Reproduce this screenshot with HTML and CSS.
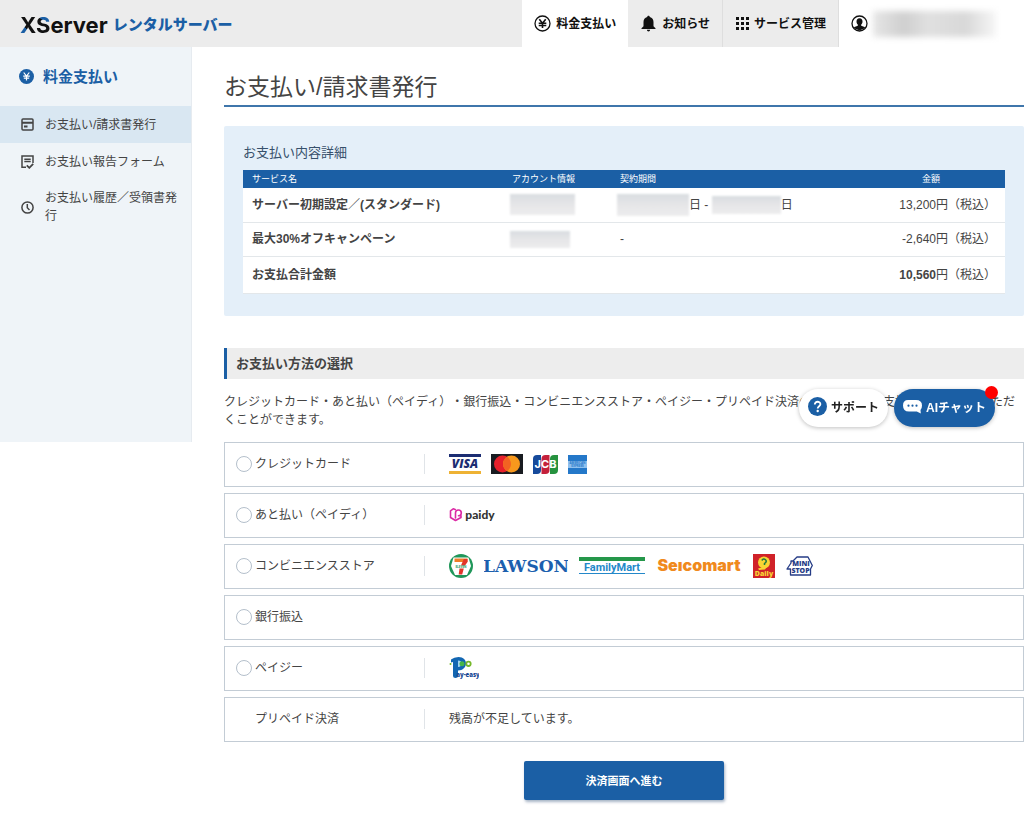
FILE: index.html
```html
<!DOCTYPE html>
<html lang="ja">
<head>
    <meta charset="UTF-8">
    <meta name="viewport" content="width=device-width, initial-scale=1.0">
    <title>お支払い/請求書発行</title>
    <link rel="stylesheet" href="styles.css">
</head>
<body>
    <header class="header">
        <a href="#" class="logo">
            <span class="logo-name"><span class="logo-x">X</span><span class="logo-s">S</span>erver</span>
            <span class="logo-sub">レンタルサーバー</span>
        </a>
        <nav class="header-nav">
            <a href="#" class="nav-item current">
                <svg width="17" height="17" viewBox="0 0 17 17" fill="none" stroke="#111">
                    <circle cx="8.5" cy="8.5" r="7.5" stroke-width="1.3"/>
                    <path d="M5.3 4.2 8.5 8.2 11.7 4.2M8.5 8v5M4.7 8.2h7.6M4.7 10.5h7.6" stroke-width="1.6"/>
                </svg>
                料金支払い
            </a>
            <a href="#" class="nav-item">
                <svg width="17" height="17" viewBox="0 0 17 17" fill="#111">
                    <path d="M8.5.7c.8 0 1.3.6 1.3 1.3 2.4.6 3.7 2.5 3.7 5v4.2l2 2v.9h-14v-.9l2-2V7c0-2.5 1.3-4.4 3.7-5 0-.7.5-1.3 1.3-1.3zM6.9 14.8h3.2a1.6 1.6 0 0 1-3.2 0z"/>
                </svg>
                お知らせ
            </a>
            <a href="#" class="nav-item">
                <svg width="14" height="14" viewBox="0 0 14 14" fill="#111">
                    <path d="M1 0h3v3H1zM6 0h3v3H6zM11 0h3v3h-3zM1 5h3v3H1zM6 5h3v3H6zM11 5h3v3h-3zM1 10h3v3H1zM6 10h3v3H6zM11 10h3v3h-3z"/>
                </svg>
                サービス管理
            </a>
            <a href="#" class="nav-item account" aria-label="アカウント">
                <svg width="17" height="17" viewBox="0 0 17 17">
                    <circle cx="8.5" cy="8.5" r="7.5" fill="none" stroke="#111" stroke-width="1.3"/>
                    <path d="M8.5 3.2c2 0 3 1.3 3 3.2 0 1.3-.5 2.5-1.3 3.2v1.2l4 1.4a7 7 0 0 1-11.4 0l4-1.4V9.6C6 8.9 5.5 7.7 5.5 6.4c0-1.9 1-3.2 3-3.2z" fill="#111"/>
                </svg>
                <span class="account-name"></span>
            </a>
        </nav>
    </header>

    <div class="container">
        <aside class="sidebar">
            <h2 class="side-title">
                <svg width="15" height="15" viewBox="0 0 15 15">
                    <circle cx="7.5" cy="7.5" r="7.5" fill="#1b5fa5"/>
                    <path d="M4.7 3.5 7.5 7l2.8-3.5M7.5 7v4.5M4.2 7.2h6.6M4.8 9.2h5.4" fill="none" stroke="#fff" stroke-width="1.2"/>
                </svg>
                料金支払い
            </h2>
            <ul class="side-menu">
                <li>
                    <a href="#" class="active">
                        <svg width="13" height="13" viewBox="0 0 13 13" fill="none" stroke="#444" stroke-width="1.5">
                            <rect x="1" y="1" width="11" height="11" rx="1"/>
                            <path d="M1 4.8h11M3 8.5h3.5" stroke-width="2"/>
                        </svg>
                        <span>お支払い/請求書発行</span>
                    </a>
                </li>
                <li>
                    <a href="#">
                        <svg width="13" height="14" viewBox="0 0 13 14" fill="none" stroke="#444" stroke-width="1.5">
                            <path d="M5 12.2H1V1h11v7M3.3 4.2h6.4M3.3 6.6h6.4"/>
                            <path d="M5.8 10.3l2.5 2.5 3.9-3.9" stroke-width="1.8"/>
                        </svg>
                        <span>お支払い報告フォーム</span>
                    </a>
                </li>
                <li>
                    <a href="#">
                        <svg width="13" height="13" viewBox="0 0 13 13" fill="none" stroke="#444" stroke-width="1.5">
                            <circle cx="6.5" cy="6.5" r="5.6"/>
                            <path d="M6.3 3v3.8l2.2 2.2"/>
                        </svg>
                        <span>お支払い履歴／受領書発行</span>
                    </a>
                </li>
            </ul>
        </aside>

        <main class="main">
            <h1 class="page-title">お支払い/請求書発行</h1>

            <section class="detail">
                <h2 class="detail-title">お支払い内容詳細</h2>
                <table class="detail-table">
                    <thead>
                        <tr>
                            <th class="col-service">サービス名</th>
                            <th class="col-account">アカウント情報</th>
                            <th>契約期間</th>
                            <th class="col-price">金額</th>
                        </tr>
                    </thead>
                    <tbody>
                        <tr>
                            <td class="name">サーバー初期設定／(スタンダード)</td>
                            <td><span class="mask mask-account"></span></td>
                            <td><span class="period"><span class="mask mask-start"></span>日 - <span class="mask mask-end"></span>日</span></td>
                            <td class="price">13,200円（税込）</td>
                        </tr>
                        <tr>
                            <td class="name">最大30%オフキャンペーン</td>
                            <td><span class="mask mask-account low"></span></td>
                            <td>-</td>
                            <td class="price">-2,640円（税込）</td>
                        </tr>
                        <tr class="total">
                            <td class="name">お支払合計金額</td>
                            <td></td>
                            <td></td>
                            <td class="price"><strong>10,560</strong>円（税込）</td>
                        </tr>
                    </tbody>
                </table>
            </section>

            <h2 class="section-title">お支払い方法の選択</h2>
            <p class="lead">クレジットカード・あと払い（ペイディ）・銀行振込・コンビニエンスストア・ペイジー・プリペイド決済の中から任意の支払方法をお選びいただくことができます。</p>

            <form action="#" method="post">
                <div class="method">
                    <label class="method-name"><input type="radio" name="payment" value="credit">クレジットカード</label>
                    <div class="method-body cards">
                        <svg width="32" height="20" viewBox="0 0 32 20" role="img" aria-label="VISA">
                            <path d="M0 0h32v3H0z" fill="#1c2d72"/>
                            <path d="M0 17h32v3H0z" fill="#eeb234"/>
                            <text x="16" y="14" class="brand visa">VISA</text>
                        </svg>
                        <svg width="32" height="20" viewBox="0 0 32 20" role="img" aria-label="Mastercard">
                            <path d="M0 0h32v20H0z" fill="#181b20"/>
                            <circle cx="11.5" cy="10" r="8.5" fill="#e6202b"/>
                            <circle cx="20.5" cy="10" r="8.5" fill="#f7981d"/>
                            <path d="M16 2.8a8.5 8.5 0 0 1 0 14.4 8.5 8.5 0 0 1 0-14.4z" fill="#f26322"/>
                        </svg>
                        <svg width="25" height="19" viewBox="0 0 25 19" role="img" aria-label="JCB">
                            <path d="M4 0h4v15q0 4-4 4H0V4q0-4 4-4z" fill="#164a9b"/>
                            <path d="M12.5 0h4v15q0 4-4 4h-4V4q0-4 4-4z" fill="#c4203b"/>
                            <path d="M21 0h4v15q0 4-4 4h-4V4q0-4 4-4z" fill="#26923f"/>
                            <text x="12.5" y="13" class="brand jcb">JCB</text>
                        </svg>
                        <svg width="19" height="19" viewBox="0 0 19 19" role="img" aria-label="American Express">
                            <path d="M0 0h19v19H0z" fill="#2478c9"/>
                            <path d="M0 6h19v7H0z" fill="#8fc0ee"/>
                            <text x="9.5" y="9.2" class="brand amex">AMERICAN</text>
                            <text x="9.5" y="12.4" class="brand amex">EXPRESS</text>
                        </svg>
                    </div>
                </div>

                <div class="method">
                    <label class="method-name"><input type="radio" name="payment" value="paidy">あと払い（ペイディ）</label>
                    <div class="method-body">
                        <svg width="48" height="18" viewBox="0 0 48 18" role="img" aria-label="paidy">
                            <path d="M6.5 12V6.8a2.9 2.9 0 1 1 3 3M6.2 3.4 4.2 2.8 1.5 4.8v6.7l5 3 5.5-3V9.5" fill="none" stroke="#dc2aa5" stroke-width="1.6" stroke-linejoin="round" stroke-linecap="round"/>
                            <text x="31" y="13" class="brand paidy">paidy</text>
                        </svg>
                    </div>
                </div>

                <div class="method">
                    <label class="method-name"><input type="radio" name="payment" value="cvs">コンビニエンスストア</label>
                    <div class="method-body stores">
                        <svg width="24" height="24" viewBox="0 0 24 24" role="img" aria-label="セブン-イレブン">
                            <circle cx="12" cy="12" r="12" fill="#20975a"/>
                            <path d="M4.5 3.5h15L22 12l-4 9H6L2 12z" fill="#fff"/>
                            <path d="M5.5 4.5h13V8h-13z" fill="#ef7d28"/>
                            <path d="M14.8 5h3.7v3L16 11.5h-4z" fill="#e2352b"/>
                            <path d="M10.5 14.5h4.3l-1.600 6H9.7z" fill="#e2352b"/>
                            <text x="12" y="14" class="brand seven">ELEVEN</text>
                        </svg>
                        <svg width="84" height="18" viewBox="0 0 84 18" role="img" aria-label="LAWSON">
                            <text x="42" y="15" class="brand lawson">LAWSON</text>
                        </svg>
                        <svg width="66" height="18" viewBox="0 0 66 18" role="img" aria-label="FamilyMart">
                            <path d="M0 0h66v4H0z" fill="#25974a"/>
                            <path d="M0 16h66v1H0z" fill="#2488c9"/>
                            <text x="33" y="14" class="brand family">FamilyMart</text>
                        </svg>
                        <svg width="86" height="20" viewBox="0 0 86 20" role="img" aria-label="Seicomart">
                            <text x="43" y="15" class="brand seico">Se&#305;comart</text>
                        </svg>
                        <svg width="22" height="24" viewBox="0 0 22 24" role="img" aria-label="デイリーヤマザキ">
                            <path d="M0 0h22v24H0z" fill="#d02229"/>
                            <circle cx="11" cy="8.5" r="6" fill="#f8d434"/>
                            <path d="M5 14.5l6-1.5 4-2-3 4.5-6 .5z" fill="#f8d434"/>
                            <path d="M8.8 6.5q1.800-2.500 3.700-.8t-1 3.800v1.500" fill="none" stroke="#25793d" stroke-width="1.5"/>
                            <text x="11" y="22" class="brand daily">Daily</text>
                        </svg>
                        <svg width="27" height="20" viewBox="0 0 27 20" role="img" aria-label="MINISTOP">
                            <path d="M4.5 19v-6H1l4-6V5h2l4-4h11l4.300 8.500-1.800 3.500v6z" fill="#fff" stroke="#263c86" stroke-width="1.3" stroke-linejoin="round"/>
                            <text x="15" y="10" class="brand mini">MINI</text>
                            <text x="14.5" y="17" class="brand mini">STOP</text>
                        </svg>
                    </div>
                </div>

                <div class="method">
                    <label class="method-name plain"><input type="radio" name="payment" value="bank">銀行振込</label>
                </div>

                <div class="method">
                    <label class="method-name"><input type="radio" name="payment" value="payeasy">ペイジー</label>
                    <div class="method-body">
                        <svg width="30" height="24" viewBox="0 0 30 24" role="img" aria-label="Pay-easy">
                            <path d="M2 3.5Q5 1 9.5 1c5 0 7.5 3 7.5 6.500S14 14.500 9 14.500V20q0 2-2.500 2T4 20V6L2 6.500z" fill="#1266b2"/>
                            <path d="M9 4.5c2.5 0 3.5 1 3.5 3s-1 3.5-3.500 3.500z" fill="#9fd3f0"/>
                            <circle cx="1.5" cy="8" r="1" fill="#76b82a"/>
                            <circle cx="13" cy="7.8" r="2.5" fill="#45b649"/>
                            <circle cx="19.5" cy="7.8" r="2.2" fill="#fff" stroke="#76b82a" stroke-width="1.8"/>
                            <text x="19" y="21" class="brand payeasy">ay-easy</text>
                        </svg>
                    </div>
                </div>

                <div class="method">
                    <div class="method-name no-radio">プリペイド決済</div>
                    <div class="method-body">残高が不足しています。</div>
                </div>

                <div class="form-footer">
                    <button type="submit" class="submit-btn">決済画面へ進む</button>
                </div>
            </form>
        </main>
    </div>

    <div class="floating">
        <button type="button" class="float-btn">
            <svg width="19" height="19" viewBox="0 0 19 19">
                <circle cx="9.5" cy="9.5" r="9.5" fill="#1b5fa5"/>
                <path d="M6.8 7.5c0-3.8 5.6-3.5 5.6-.3 0 2-2.7 2-2.7 4.3" fill="none" stroke="#fff" stroke-width="1.8"/>
                <circle cx="9.7" cy="14" r="1.2" fill="#fff"/>
            </svg>
            サポート
        </button>
        <button type="button" class="float-btn chat">
            <svg width="19" height="15" viewBox="0 0 19 15">
                <path d="M6 1h7q6 0 6 5.5 0 3-1.5 4.5l.3 3.5-4-2H6q-6 0-6-6T6 1z" fill="#fff"/>
                <circle cx="5.5" cy="6.7" r="1.1" fill="#1b5fa5"/>
                <circle cx="9.5" cy="6.7" r="1.1" fill="#1b5fa5"/>
                <circle cx="13.5" cy="6.7" r="1.1" fill="#1b5fa5"/>
            </svg>
            AIチャット
            <span class="dot"></span>
        </button>
    </div>
</body>
</html>
```

FILE: styles.css
```css
* {
    box-sizing: border-box;
}
body {
    margin: 0;
    background-color: #fff;
    color: #444;
    font-family: "Liberation Sans", "Noto Sans CJK JP", sans-serif;
    font-size: 12px;
    line-height: 18px;
    text-spacing-trim: space-all;
}
a {
    color: inherit;
    text-decoration: none;
}
h1, h2, p, ul {
    margin: 0;
    padding: 0;
}
svg {
    display: block;
    flex: none;
}

/* header */
.header {
    display: flex;
    justify-content: space-between;
    height: 47px;
    background-color: #ececec;
}
.logo {
    display: flex;
    align-items: center;
    gap: 5px;
    padding: 2px 0 0 20px;
    font-weight: bold;
}
.logo-name {
    color: #111;
    font-family: Inter, sans-serif;
    font-size: 22px;
}
.logo-x {
    background: linear-gradient(40deg, #1b5fa5 36%, #111 37%);
    -webkit-background-clip: text;
    background-clip: text;
    color: transparent;
}
.logo-s {
    background: linear-gradient(220deg, #1b5fa5 38%, #111 39%);
    -webkit-background-clip: text;
    background-clip: text;
    color: transparent;
}
.logo-sub {
    color: #1b5fa5;
    font-size: 15px;
    font-weight: 900;
}
.header-nav {
    display: flex;
}
.nav-item {
    display: flex;
    align-items: center;
    gap: 5px;
    padding: 0 12px;
    border-right: 1px solid #dedede;
    color: #111;
    font-weight: bold;
}
.nav-item.current,
.nav-item.account {
    border-right: none;
    background-color: #fff;
}
.nav-item.account {
    padding-right: 28px;
}
.account-name {
    width: 123px;
    height: 26px;
    background: linear-gradient(90deg, #e6e6e6, #cfcfcf 25%, #e0e0e0 45%, #d8d8d8 75%, #f6f6f6);
    filter: blur(3px);
}

/* sidebar */
.container {
    display: flex;
    align-items: flex-start;
}
.sidebar {
    flex: none;
    width: 192px;
    padding-bottom: 208px;
    border-right: 1px solid #e6ebf0;
    background-color: #eff4f8;
}
.side-title {
    display: flex;
    align-items: center;
    gap: 9px;
    height: 59px;
    padding-left: 19px;
    color: #1b5fa5;
    font-size: 15px;
}
.side-menu {
    list-style: none;
}
.side-menu a {
    display: flex;
    align-items: center;
    gap: 11px;
    min-height: 37px;
    padding: 9px 14px 9px 21px;
}
.side-menu a.active {
    background-color: #d9e7f2;
}

/* main */
.main {
    flex: 1;
    min-width: 0;
    padding: 24px 0 24px 32px;
}
.page-title {
    padding-bottom: 2px;
    border-bottom: 2px solid #3f76ab;
    font-size: 23px;
    font-weight: normal;
    line-height: 32px;
}
.detail {
    margin-top: 19px;
    padding: 18px 19px 22px;
    border-radius: 2px;
    background-color: #e4eff9;
}
.detail-title {
    margin-bottom: 8px;
    color: #37506b;
    font-size: 13px;
    font-weight: normal;
}
.detail-table {
    width: 100%;
    border-collapse: collapse;
    table-layout: fixed;
    background-color: #fff;
}
.detail-table th {
    height: 18px;
    padding: 0 9px;
    background-color: #1b5fa5;
    color: #fff;
    font-size: 9px;
    font-weight: normal;
    line-height: 17px;
    text-align: left;
}
.detail-table .col-service {
    width: 260px;
}
.detail-table .col-account {
    width: 108px;
}
.detail-table .col-price {
    width: 148px;
    text-align: center;
}
.detail-table td {
    height: 34px;
    padding: 0 9px;
    border-bottom: 1px solid #e3e7ea;
}
.detail-table .total td {
    height: 37px;
}
.detail-table .name {
    font-weight: bold;
}
.detail-table .price {
    text-align: right;
}
.period {
    display: flex;
    align-items: center;
    white-space: pre;
}
.mask {
    display: block;
    background: linear-gradient(#d9dde1, #e6e6e8 50%, #ededee);
    filter: blur(1px);
}
.mask-account {
    width: 65px;
    height: 21px;
    margin-left: -2px;
}
.mask-account.low {
    width: 60px;
    height: 17px;
}
.mask-start {
    width: 72px;
    height: 22px;
    margin-left: -3px;
}
.mask-end {
    width: 69px;
    height: 18px;
}
.section-title {
    margin-top: 32px;
    padding: 7px 9px 6px;
    border-left: 3px solid #1b5fa5;
    background-color: #ededed;
    font-size: 13px;
}
.lead {
    margin: 14px 0 13px;
}

/* payment methods */
.method {
    display: flex;
    align-items: center;
    height: 45px;
    margin-bottom: 6px;
    border: 1px solid #c3ccd5;
}
.method-name {
    display: flex;
    align-items: center;
    gap: 3px;
    width: 200px;
    height: 20px;
    padding-left: 11px;
    border-right: 1px solid #e0e4e8;
}
.method-name.plain {
    border-right: none;
}
.method-name.no-radio {
    padding-left: 30px;
}
.method-name input {
    appearance: none;
    width: 16px;
    height: 16px;
    margin: 0;
    border: 1px solid #b4bfcb;
    border-radius: 50%;
    background-color: #fff;
}
.method-name input:checked {
    border: 5px solid #1b5fa5;
}
.method-body {
    display: flex;
    align-items: center;
    padding-left: 24px;
}
.cards {
    gap: 10px;
}
.stores {
    gap: 11px;
}
.brand {
    font-family: "Open Sans", sans-serif;
    font-weight: bold;
    text-anchor: middle;
}
.visa {
    fill: #1c2d72;
    font-size: 12px;
    font-style: italic;
    font-weight: 800;
}
.jcb {
    fill: #fff;
    font-family: Inter, sans-serif;
    font-size: 11px;
}
.amex {
    fill: #2478c9;
    font-size: 3px;
}
.paidy {
    fill: #333;
    font-family: Lato, sans-serif;
    font-size: 12px;
    font-weight: 900;
}
.seven {
    fill: #20975a;
    font-size: 3px;
}
.lawson {
    fill: #1c5fae;
    font-family: "DejaVu Serif", serif;
    font-size: 17px;
}
.family {
    fill: #2488c9;
    font-family: Roboto, sans-serif;
    font-size: 11px;
}
.seico {
    fill: #f08a1d;
    font-family: Inter, sans-serif;
    font-size: 16px;
    font-weight: 900;
}
.daily {
    fill: #f8d434;
    font-size: 7px;
    font-weight: 800;
}
.mini {
    fill: #263c86;
    font-size: 7px;
    font-weight: 800;
}
.payeasy {
    fill: #1a4a96;
    font-size: 6px;
    font-weight: 800;
}
.form-footer {
    display: flex;
    justify-content: center;
    padding-top: 13px;
}
.submit-btn {
    width: 200px;
    height: 39px;
    border: none;
    border-radius: 2px;
    background-color: #1b5fa5;
    box-shadow: 1px 2px 3px rgba(0, 40, 90, 0.35);
    color: #fff;
    font-family: inherit;
    font-size: 11px;
    font-weight: bold;
    cursor: pointer;
}

/* support / chat */
.floating {
    position: fixed;
    top: 389px;
    right: 29px;
    display: flex;
    gap: 6px;
}
.float-btn {
    position: relative;
    display: flex;
    align-items: center;
    gap: 4px;
    height: 38px;
    padding: 0 9px 3px;
    border: none;
    border-radius: 19px;
    background-color: #fff;
    box-shadow: 0 1px 4px rgba(0, 0, 0, 0.25);
    color: #222;
    font-family: inherit;
    font-size: 12px;
    font-weight: bold;
    cursor: pointer;
}
.float-btn.chat {
    background-color: #1b5fa5;
    color: #fff;
}
.dot {
    position: absolute;
    top: -3px;
    right: -3px;
    width: 13px;
    height: 13px;
    border-radius: 50%;
    background-color: #f00;
}
```
